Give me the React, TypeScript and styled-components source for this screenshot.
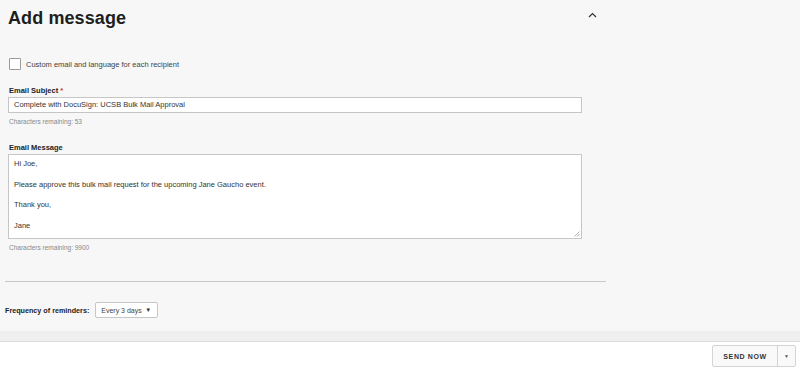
import styled, { createGlobalStyle } from "styled-components";

const GlobalStyle = createGlobalStyle`
  html, body {
    margin: 0;
    padding: 0;
    background: #ffffff;
    font-family: "Liberation Sans", Arial, sans-serif;
    color: #333333;
  }
`;

const Page = styled.div`
  width: 800px;
  height: 370px;
  display: flex;
  flex-direction: column;
  overflow: hidden;
`;

const Main = styled.div`
  background: #f7f7f7;
  height: 331px;
  padding: 0 0 0 8px;
  box-sizing: border-box;
`;

const Header = styled.div`
  width: 589px;
  height: 36px;
  display: flex;
  align-items: center;
  justify-content: space-between;
`;

const Title = styled.h2`
  margin: 0;
  font-size: 18px;
  font-weight: bold;
  color: #1e1e1e;
  letter-spacing: 0.1px;
`;

const Chevron = styled.svg`
  width: 9px;
  height: 6px;
  margin-top: -6px;
`;

const CheckRow = styled.label`
  display: flex;
  align-items: center;
  gap: 5px;
  margin-top: 22px;
  padding-left: 1px;
  font-size: 7.5px;
  color: #444;
`;

const Box = styled.span`
  width: 10px;
  height: 10px;
  border: 1px solid #9a9a9a;
  border-radius: 1px;
  background: #fff;
`;

const Field = styled.div<{ $top: number }>`
  margin-top: ${(p) => p.$top}px;
  width: 574px;
`;

const Label = styled.div`
  font-size: 7.5px;
  font-weight: bold;
  color: #222;
  padding-left: 1px;
  height: 12px;
  line-height: 12px;
`;

const Star = styled.span`
  color: #c0392b;
`;

const Input = styled.div`
  height: 16px;
  box-sizing: border-box;
  border: 1px solid #c6c6c6;
  background: #fff;
  font-size: 7.5px;
  line-height: 14px;
  padding-left: 5px;
  color: #333;
`;

const TextArea = styled.div`
  position: relative;
  height: 85px;
  box-sizing: border-box;
  border: 1px solid #c6c6c6;
  background: #fff;
  font-size: 7.5px;
  line-height: 10.3px;
  padding: 4px 5px;
  color: #333;
`;

const Para = styled.p`
  margin: 0 0 10.3px;
`;

const Grip = styled.svg`
  position: absolute;
  right: 1px;
  bottom: 1px;
  width: 6px;
  height: 6px;
`;

const Hint = styled.div`
  font-size: 6.5px;
  color: #888;
  padding-left: 1px;
  margin-top: 5px;
`;

const Divider = styled.hr`
  margin: 30px 0 0 -3px;
  width: 601px;
  border: 0;
  border-top: 1px solid #c8c8c8;
`;

const ReminderRow = styled.div`
  display: flex;
  align-items: center;
  gap: 6px;
  margin: 20px 0 0 -3px;
`;

const ReminderLabel = styled.span`
  font-size: 7.2px;
  font-weight: bold;
  color: #222;
`;

const Select = styled.div`
  width: 63px;
  height: 16px;
  box-sizing: border-box;
  border: 1px solid #c6c6c6;
  border-radius: 2px;
  background: #fff;
  display: flex;
  align-items: center;
  justify-content: space-between;
  padding: 0 6px 0 5px;
  font-size: 7px;
  white-space: nowrap;
  color: #444;
`;

const Caret = styled.span`
  font-size: 6px;
  color: #333;
`;

const Band = styled.div`
  height: 10px;
  background: #efefef;
  border-bottom: 1px solid #dcdcdc;
`;

const Footer = styled.div`
  flex: 1;
  background: #fff;
  display: flex;
  justify-content: flex-end;
  align-items: center;
  padding-right: 4px;
`;

const SplitButton = styled.div`
  display: flex;
  height: 20px;
  border: 1px solid #d4d4d4;
  border-radius: 2px;
  background: #f9f9f9;
`;

const SendButton = styled.button`
  width: 65px;
  border: 0;
  border-right: 1px solid #d4d4d4;
  background: transparent;
  font-family: "Liberation Sans", Arial, sans-serif;
  font-size: 7px;
  font-weight: bold;
  letter-spacing: 0.6px;
  color: #333;
  padding: 0;
`;

const MenuButton = styled.button`
  width: 17px;
  border: 0;
  background: transparent;
  font-size: 5px;
  color: #555;
  padding: 0;
`;

export default function App() {
  return (
    <>
      <GlobalStyle />
      <Page>
        <Main>
          <Header>
            <Title>Add message</Title>
            <Chevron viewBox="0 0 9 6">
              <path d="M1 5 L4.5 1.5 L8 5" fill="none" stroke="#333" strokeWidth="1.2" />
            </Chevron>
          </Header>

          <CheckRow>
            <Box />
            Custom email and language for each recipient
          </CheckRow>

          <Field $top={15}>
            <Label>
              Email Subject <Star>*</Star>
            </Label>
            <Input>Complete with DocuSign: UCSB Bulk Mail Approval</Input>
            <Hint>Characters remaining: 53</Hint>
          </Field>

          <Field $top={17}>
            <Label>Email Message</Label>
            <TextArea>
              <Para>Hi Joe,</Para>
              <Para>Please approve this bulk mail request for the upcoming Jane Gaucho event.</Para>
              <Para>Thank you,</Para>
              <Para>Jane</Para>
              <Grip viewBox="0 0 6 6">
                <path d="M5.5 0.5 L0.5 5.5 M5.5 3 L3 5.5" stroke="#999" strokeWidth="0.8" />
              </Grip>
            </TextArea>
            <Hint>Characters remaining: 9900</Hint>
          </Field>

          <Divider />

          <ReminderRow>
            <ReminderLabel>Frequency of reminders:</ReminderLabel>
            <Select>
              <span>Every 3 days</span>
              <Caret>▼</Caret>
            </Select>
          </ReminderRow>
        </Main>
        <Band />
        <Footer>
          <SplitButton>
            <SendButton>SEND NOW</SendButton>
            <MenuButton>▼</MenuButton>
          </SplitButton>
        </Footer>
      </Page>
    </>
  );
}
